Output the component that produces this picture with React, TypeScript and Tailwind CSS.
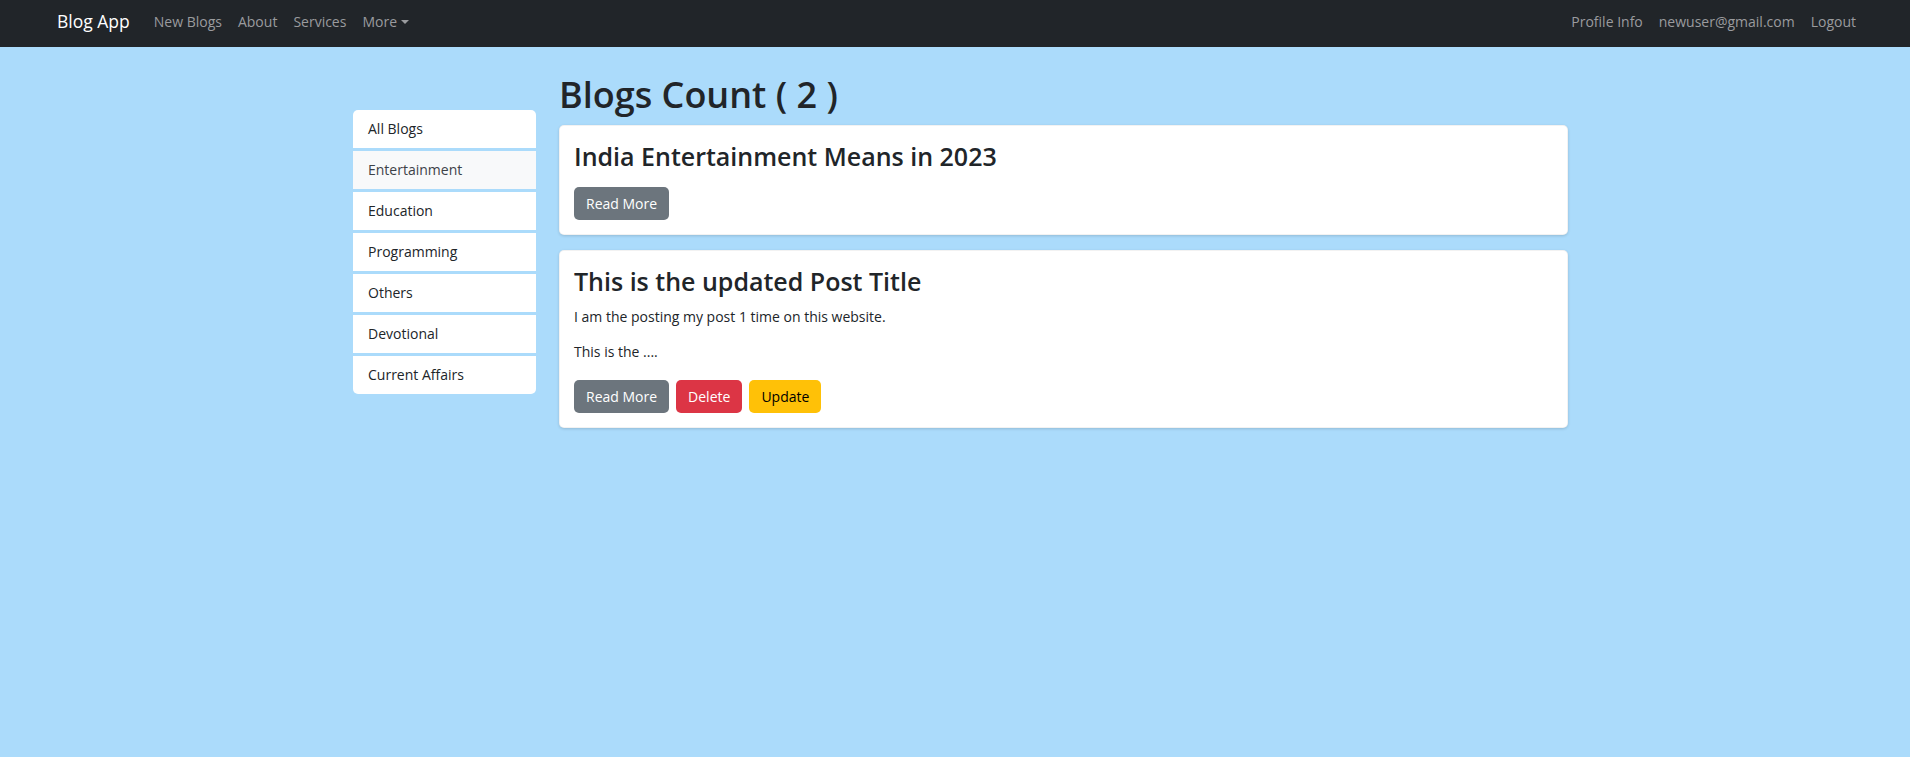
import React from 'react';

const categories = [
  'All Blogs',
  'Entertainment',
  'Education',
  'Programming',
  'Others',
  'Devotional',
  'Current Affairs',
];

const NavBar = () => {
  return (
    <nav className="h-[47px] bg-[#212529] flex items-center justify-between pl-[57px] pr-[46px] pb-[4px]">
      <div className="flex items-center">
        <a className="text-[17.5px] text-white mr-[16px] leading-none">Blog App</a>
        <a className="px-2 text-[14px] text-[#9a9b9e]">New Blogs</a>
        <a className="px-2 text-[14px] text-[#9a9b9e]">About</a>
        <a className="px-2 text-[14px] text-[#9a9b9e]">Services</a>
        <a className="px-2 text-[14px] text-[#9a9b9e] flex items-center">
          More
          <span className="ml-[4px] mt-[1px] w-0 h-0 border-l-[4px] border-r-[4px] border-t-[4.5px] border-l-transparent border-r-transparent border-t-[#9a9b9e]"></span>
        </a>
      </div>
      <div className="flex items-center">
        <a className="px-2 text-[14px] text-[#9a9b9e]">Profile Info</a>
        <a className="px-2 text-[14px] text-[#9a9b9e]">newuser@gmail.com</a>
        <a className="px-2 text-[14px] text-[#9a9b9e]">Logout</a>
      </div>
    </nav>
  );
};

const Sidebar = () => {
  return (
    <div className="w-[183px] mt-[36px] flex flex-col gap-[3.5px] shrink-0">
      {categories.map((cat, i) => (
        <div
          key={cat}
          className={
            'h-[37.5px] flex items-center pl-[15px] text-[14px] ' +
            (i === 1 ? 'bg-[#f8f9fa] text-[#3d4248] ' : 'bg-white text-[#212529] ') +
            (i === 0 ? 'rounded-t-[5px] ' : '') +
            (i === categories.length - 1 ? 'rounded-b-[5px]' : '')
          }
        >
          {cat}
        </div>
      ))}
    </div>
  );
};

const Btn = ({ label, color }: { label: string; color: 'gray' | 'red' | 'yellow' }) => {
  const cls =
    color === 'gray'
      ? 'bg-[#6c757d] text-white'
      : color === 'red'
      ? 'bg-[#dc3545] text-white'
      : 'bg-[#ffc107] text-black';
  return (
    <button className={'h-[33.5px] px-[12px] rounded-[5px] text-[14px] ' + cls}>{label}</button>
  );
};

export default function App() {
  return (
    <div className="min-h-screen bg-[#abdbfb] font-['Open_Sans',sans-serif] text-[#212529]">
      <NavBar />
      <div className="pt-[27px] pl-[353px] flex gap-[23px]">
        <Sidebar />
        <div className="w-[1009px]">
          <h1 className="text-[36px] leading-[42px] font-semibold mb-[9px]">Blogs Count ( 2 )</h1>
          <div className="flex flex-col gap-[15px]">
            <div className="bg-white rounded-[5px] border border-black/5 shadow-[0_1px_3px_rgba(0,0,0,0.15)] px-[14px] pt-[14px] pb-[14px]">
              <h2 className="text-[25px] leading-[33.6px] font-semibold mb-[13px]">India Entertainment Means in 2023</h2>
              <div className="flex gap-[7px]">
                <Btn label="Read More" color="gray" />
              </div>
            </div>
            <div className="bg-white rounded-[5px] border border-black/5 shadow-[0_1px_3px_rgba(0,0,0,0.15)] px-[14px] pt-[14px] pb-[14px]">
              <h2 className="text-[25px] leading-[33.6px] font-semibold mb-[7px]">This is the updated Post Title</h2>
              <p className="text-[14px] leading-[21px] mb-[14px]">I am the posting my post 1 time on this website.</p>
              <p className="text-[14px] leading-[21px] mb-[18px]">This is the ....</p>
              <div className="flex gap-[7px]">
                <Btn label="Read More" color="gray" />
                <Btn label="Delete" color="red" />
                <Btn label="Update" color="yellow" />
              </div>
            </div>
          </div>
        </div>
      </div>
    </div>
  );
}
